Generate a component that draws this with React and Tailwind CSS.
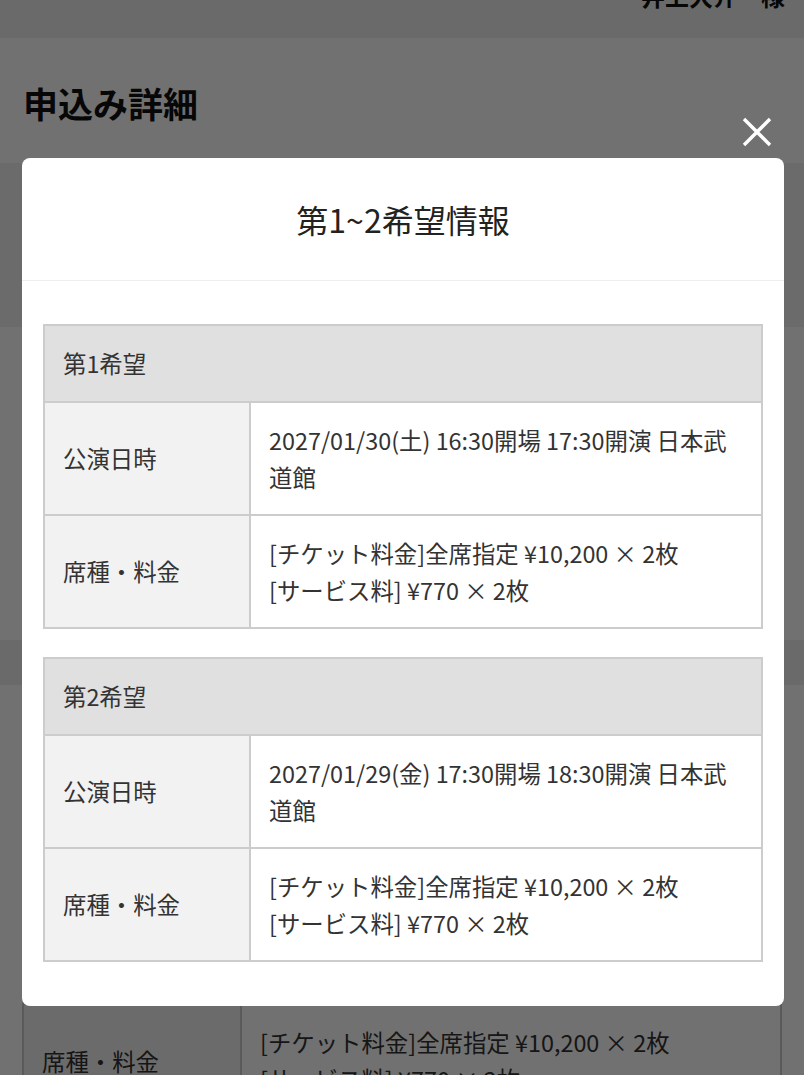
import React from "react";

const font = { fontFamily: '"Noto Sans CJK JP", "Noto Sans", sans-serif' };

function Row({ label, lines, last }) {
  return (
    <div className={`grid grid-cols-[206px_1fr] ${last ? "" : "border-b-2 border-[#cccccc]"}`}>
      <div className="bg-[#f2f2f2] border-r-2 border-[#cccccc] px-[18px] flex items-center">
        <span>{label}</span>
      </div>
      <div className="bg-white px-[18px] pt-[19px] pb-[18px]">
        {lines.map((l, i) => (
          <div key={i}>{l}</div>
        ))}
      </div>
    </div>
  );
}

function Choice({ title, date }) {
  return (
    <div className="border-2 border-[#cccccc] text-[23.4px] leading-[37px] text-[#333333]">
      <div className="bg-[#e0e0e0] border-b-2 border-[#cccccc] px-[18px] py-[19px]">{title}</div>
      <Row label="公演日時" lines={[date]} />
      <Row
        label="席種・料金"
        lines={["[チケット料金]全席指定 ¥10,200 × 2枚", "[サービス料] ¥770 × 2枚"]}
        last
      />
    </div>
  );
}

export default function App() {
  return (
    <div className="relative h-[1075px] overflow-hidden bg-white text-[#1a1a1a]" style={font}>
      {/* underlying page */}
      <div className="h-[38px] bg-[#efefef] overflow-hidden flex justify-end pr-[19px]">
        <div className="mt-[-22px] text-[24px] font-bold leading-[36px] text-[#111]">井上大介　様</div>
      </div>
      <div className="h-[125px] px-[23px] pt-[40px]">
        <h1 className="text-[35px] font-bold leading-[50px] text-[#111]">申込み詳細</h1>
      </div>
      <div className="h-[164px] bg-[#f2f2f2]"></div>
      <div className="h-[313px]"></div>
      <div className="h-[45px] bg-[#efefef]"></div>
      <div className="h-[318px]"></div>
      <div className="mx-[22px] border-2 border-[#cccccc] text-[23.4px] leading-[37px] text-[#333333]">
        <div className="grid grid-cols-[218px_1fr]">
          <div className="bg-[#f2f2f2] border-r-2 border-[#cccccc] px-[18px] flex items-center">席種・料金</div>
          <div className="px-[18px] py-[19px]">
            <div>[チケット料金]全席指定 ¥10,200 × 2枚</div>
            <div>[サービス料] ¥770 × 2枚</div>
          </div>
        </div>
      </div>

      {/* overlay */}
      <div className="absolute inset-0 bg-black/[0.557]"></div>

      {/* close button */}
      <button className="absolute left-[740px] top-[115px] w-[34px] h-[34px] flex items-center justify-center" aria-label="close">
        <svg width="32" height="32" viewBox="0 0 32 32" fill="none" stroke="white" strokeWidth="3.4">
          <path d="M3 3 L29 29 M29 3 L3 29" />
        </svg>
      </button>

      {/* modal */}
      <div className="absolute left-[22px] right-[20px] top-[158px] bg-white rounded-[8px]">
        <div className="h-[123px] border-b border-[#eeeeee] flex items-center justify-center">
          <h2 className="text-[32px] leading-[44px] text-[#222] font-normal">第1~2希望情報</h2>
        </div>
        <div className="px-[21px] pt-[43px] pb-[44px] flex flex-col gap-[28px]">
          <Choice title="第1希望" date="2027/01/30(土) 16:30開場 17:30開演 日本武道館" />
          <Choice title="第2希望" date="2027/01/29(金) 17:30開場 18:30開演 日本武道館" />
        </div>
      </div>
    </div>
  );
}
